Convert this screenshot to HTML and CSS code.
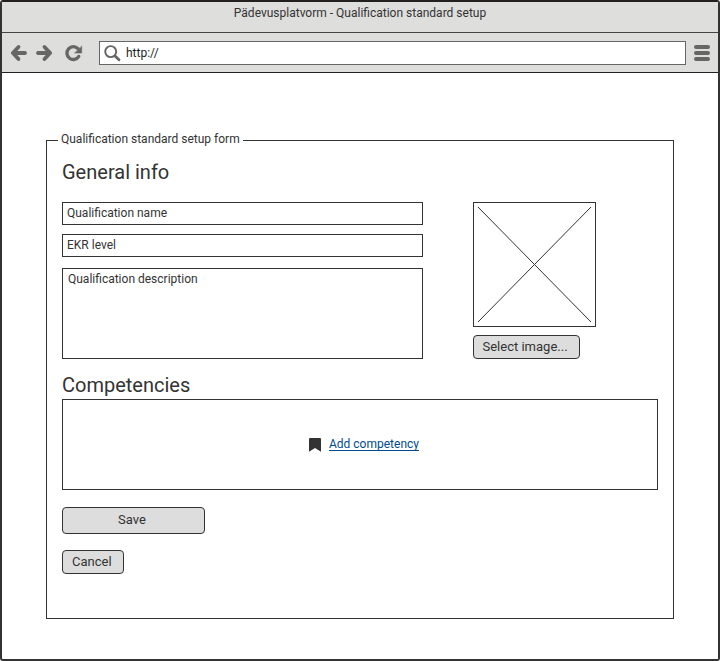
FILE: index.html
```html
<!DOCTYPE html>
<html lang="en">
<head>
<meta charset="utf-8">
<title>Pädevusplatvorm - Qualification standard setup</title>
<link rel="stylesheet" href="styles.css">
</head>
<body>
<div class="window">
  <header class="titlebar"><span>Pädevusplatvorm - Qualification standard setup</span></header>
  <nav class="toolbar">
    <svg class="nav-icons" width="90" height="38" viewBox="0 0 90 38" fill="none" stroke="#666" stroke-width="3.8" stroke-linecap="round" stroke-linejoin="round">
      <path d="M23 20H11M16.5 14L10.8 20L16.5 26"/>
      <path d="M36 20H48M42.5 14L48.2 20L42.5 26"/>
      <path d="M76.8 23.4A6.4 6.4 0 1 1 76 15.7" stroke-width="3.3"/>
      <path d="M79.7 13.4V20H72.9Z" fill="#666" stroke="#666" stroke-width=".6"/>
    </svg>
    <div class="address">
      <svg width="18" height="18" viewBox="0 0 18 18" fill="none" stroke="#666" stroke-linecap="round"><circle cx="6.7" cy="6.6" r="5.5" stroke-width="1.9"/><path d="M11.3 11.2L15 14.7" stroke-width="2.8"/></svg>
      <span>http://</span>
    </div>
    <svg class="menu" width="16" height="16" viewBox="0 0 16 16" fill="#666"><rect width="16" height="4" rx="2"/><rect y="6" width="16" height="4" rx="2"/><rect y="12" width="16" height="4" rx="2"/></svg>
  </nav>
  <main class="page">
    <fieldset class="form">
      <legend><span>Qualification standard setup form</span></legend>
      <h2 class="general">General info</h2>
      <div class="columns">
        <div class="fields">
          <div class="field"><span>Qualification name</span></div>
          <div class="field"><span>EKR level</span></div>
          <div class="field area"><span>Qualification description</span></div>
        </div>
        <div class="picture">
          <svg width="123" height="125" viewBox="0 0 123 125" fill="none" stroke="#333"><rect x=".5" y=".5" width="122" height="124"/><path d="M5 5L118 120M118 5L5 120"/></svg>
          <button class="btn select" type="button"><span>Select image...</span></button>
        </div>
      </div>
      <h2 class="comp">Competencies</h2>
      <div class="competencies">
        <svg width="12" height="14" viewBox="0 0 12 14" fill="#333"><path d="M1 0H11Q12 0 12 1V13.8L6 10L0 13.8V1Q0 0 1 0Z"/></svg>
        <a>Add competency</a>
      </div>
      <button class="btn save" type="button"><span>Save</span></button>
      <button class="btn cancel" type="button"><span>Cancel</span></button>
    </fieldset>
  </main>
</div>
</body>
</html>
```
FILE: styles.css
```css
* { box-sizing: border-box; }
body { margin: 0; background: #fff; color: #333; font: 12px/14px Roboto, sans-serif; }
.window { height: 661px; border: 2px solid #333; border-top-color: #231f1e; border-radius: 3px; overflow: hidden; }
.titlebar { height: 31px; padding-top: 4px; text-align: center; background: #dededd; border-bottom: 1px solid #444; }
.toolbar { height: 40px; display: flex; background: #dededd; border-bottom: 1px solid #231f1e; }
.nav-icons { flex: none; margin-right: 7px; }
.address { width: 587px; height: 24px; margin-top: 8px; border: 1px solid #666; background: #fff; display: flex; color: #231f1e; }
.address svg { margin: 3px 4px 0 4px; }
.address span { margin-top: 4px; }
.menu { margin: 12px 0 0 8px; }
.page { padding: 60px 44px 0; }
.form { height: 486px; margin: 0; padding: 0 15px; border: 1px solid #333; min-width: 0; }
legend { height: 15px; margin-left: -4px; padding: 0 3px; line-height: 12px; }
h2 { margin: 0; font-size: 20px; line-height: 24px; font-weight: 400; }
.general { margin-top: 12px; }
.columns { display: flex; gap: 50px; margin-top: 18px; }
.fields { width: 361px; }
.field { height: 23px; border: 1px solid #333; padding: 3px 4px; margin-bottom: 9px; }
.area { height: 91px; margin: 11px 0 0; padding: 3px 5px; }
.picture { width: 123px; }
.picture svg { display: block; margin-bottom: 8px; }
.btn { display: block; height: 24px; padding: 0 9px; border: 1px solid #333; border-radius: 4px; background: #ddd; color: #333; font: 13px/22px Roboto, sans-serif; text-align: left; }
.select { width: 107px; padding-left: 8.5px; }
.comp { margin-top: 14px; }
.competencies { height: 91px; margin-top: 2px; border: 1px solid #333; display: flex; }
.competencies svg { margin: 38px 8px 0 246px; }
.competencies a { height: 14px; margin-top: 37px; color: #004b8c; border-bottom: 1px solid #004b8c; }
.save { width: 143px; height: 27px; margin-top: 17px; padding: 0 0 2px 55px; }
.cancel { width: 62px; margin-top: 16px; }
```
